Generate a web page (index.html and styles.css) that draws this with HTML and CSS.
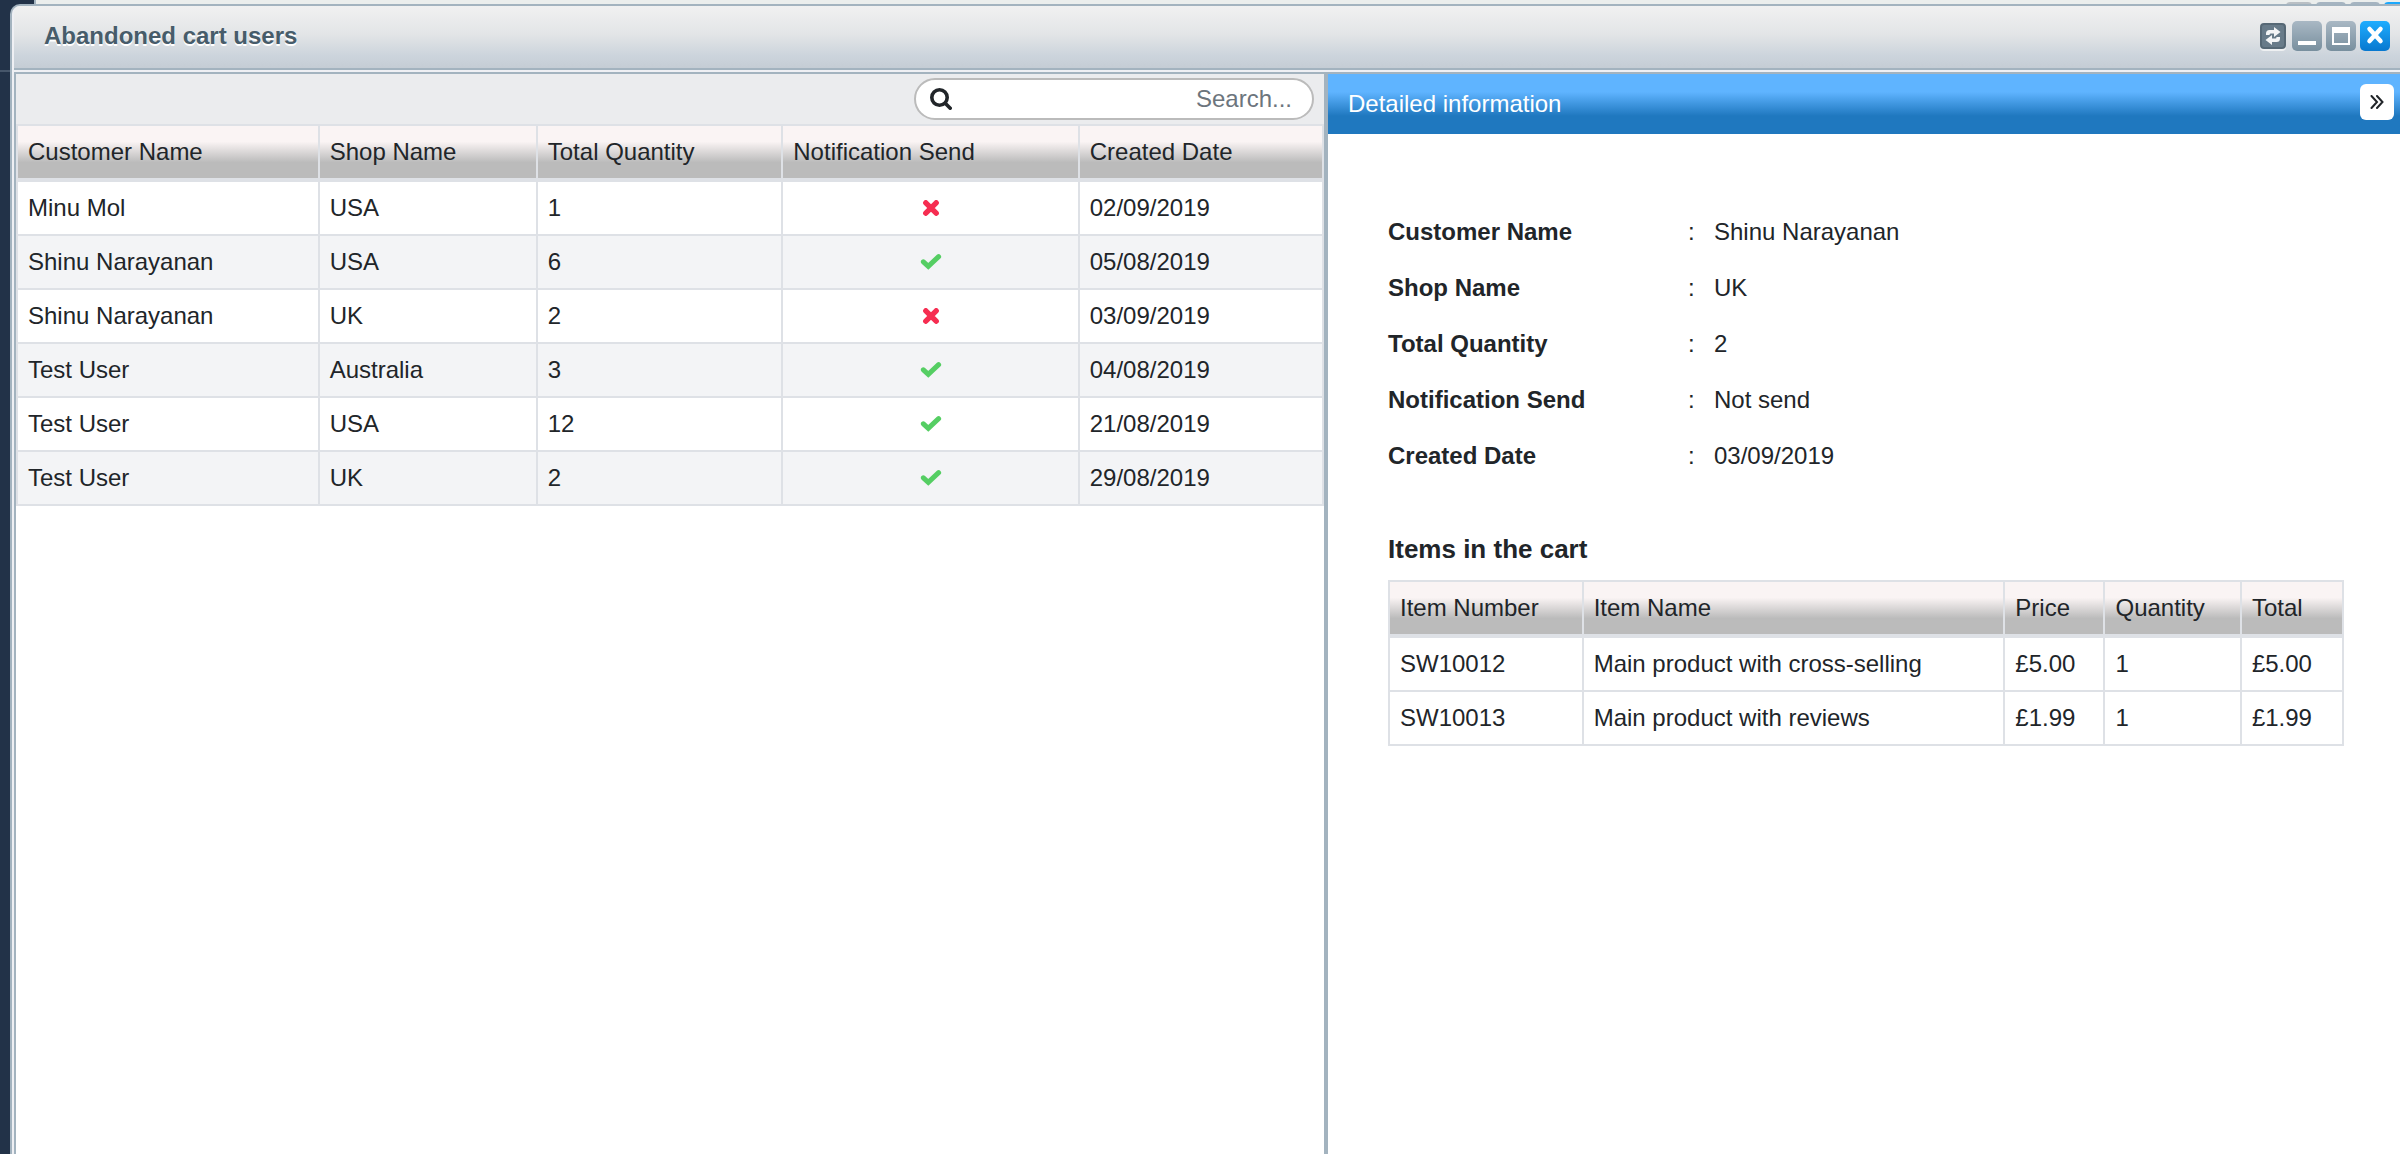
FILE: index.html
```html
<!DOCTYPE html>
<html lang="en">
<head>
<meta charset="utf-8">
<title>Abandoned cart users</title>
<link rel="stylesheet" href="styles.css">
</head>
<body>
<svg class="sprite" aria-hidden="true">
  <symbol id="yes" viewBox="0 0 22 16"><path d="M3.400 7.800L8.300 12.300L18.600 2.700" fill="none" stroke="#55ce63" stroke-width="5" stroke-linecap="round"/></symbol>
  <symbol id="no" viewBox="0 0 22 16"><path d="M5.800 2.800L16.200 13.200M16.200 2.800L5.800 13.200" fill="none" stroke="#f62d51" stroke-width="5.400" stroke-linecap="round"/></symbol>
</svg>

<div class="back-window" aria-hidden="true">
  <span class="back-tool faint"></span><span class="back-tool"></span><span class="back-tool"></span><span class="back-tool blue"></span>
</div>

<main class="window">
  <header class="title-bar">
    <h1 class="title">Abandoned cart users</h1>
    <div class="tools">
      <button class="tool refresh" type="button" aria-label="Refresh"><svg viewBox="0 0 22 22"><path d="M4 10V8.500Q4 5 7.500 5H12V2l6.500 5L12 12V8.500H8.500Q7.500 8.500 7.500 10zM18 12v1.500q0 3.500-3.500 3.500H10v3L3.500 15 10 10v3.500h3.500q1 0 1-1.500z" fill="#f4f5f6"/></svg></button>
      <button class="tool" type="button" aria-label="Minimize"><svg viewBox="0 0 30 30"><rect x="6" y="20" width="18" height="4" fill="#fff"/></svg></button>
      <button class="tool" type="button" aria-label="Maximize"><svg viewBox="0 0 30 30"><path d="M6 6h18v18H6zM8 12v10h14V12z" fill="#fff" fill-rule="evenodd"/></svg></button>
      <button class="tool close" type="button" aria-label="Close"><svg viewBox="0 0 30 30"><path d="M9.500 8l11 12M20.500 8l-11 12" stroke="#fff" stroke-width="4.500" stroke-linecap="round"/></svg></button>
    </div>
  </header>

  <div class="panes">
    <section class="list-pane">
      <form class="toolbar">
        <label class="search">
          <svg class="search-icon" viewBox="0 0 22 22" aria-hidden="true"><circle cx="9.500" cy="9.500" r="7.700" fill="none" stroke="#212529" stroke-width="3.600"/><path d="M15.500 15.500l4.700 4.700" stroke="#212529" stroke-width="3.600" stroke-linecap="round"/></svg>
          <input class="search-input" type="text" placeholder="Search..." aria-label="Search">
        </label>
      </form>
      <table class="grid users">
        <colgroup><col class="u-name"><col class="u-shop"><col class="u-qty"><col class="u-note"><col class="u-date"></colgroup>
        <thead>
          <tr><th scope="col">Customer Name</th><th scope="col">Shop Name</th><th scope="col">Total Quantity</th><th scope="col">Notification Send</th><th scope="col">Created Date</th></tr>
        </thead>
        <tbody>
          <tr><td>Minu Mol</td><td>USA</td><td>1</td><td><svg class="mark" role="img" aria-label="Not sent"><use href="#no"/></svg></td><td>02/09/2019</td></tr>
          <tr><td>Shinu Narayanan</td><td>USA</td><td>6</td><td><svg class="mark" role="img" aria-label="Sent"><use href="#yes"/></svg></td><td>05/08/2019</td></tr>
          <tr><td>Shinu Narayanan</td><td>UK</td><td>2</td><td><svg class="mark" role="img" aria-label="Not sent"><use href="#no"/></svg></td><td>03/09/2019</td></tr>
          <tr><td>Test User</td><td>Australia</td><td>3</td><td><svg class="mark" role="img" aria-label="Sent"><use href="#yes"/></svg></td><td>04/08/2019</td></tr>
          <tr><td>Test User</td><td>USA</td><td>12</td><td><svg class="mark" role="img" aria-label="Sent"><use href="#yes"/></svg></td><td>21/08/2019</td></tr>
          <tr><td>Test User</td><td>UK</td><td>2</td><td><svg class="mark" role="img" aria-label="Sent"><use href="#yes"/></svg></td><td>29/08/2019</td></tr>
        </tbody>
      </table>
    </section>

    <section class="detail-pane">
      <header class="detail-head">
        <h2 class="detail-title">Detailed information</h2>
        <button class="collapse" type="button" aria-label="Collapse panel"><svg viewBox="0 0 14 14"><path d="M1.500 1L7 7l-5.500 6M7 1l5.500 6L7 13" fill="none" stroke="#212529" stroke-width="2" stroke-linecap="round"/></svg></button>
      </header>
      <div class="detail-body">
        <dl class="facts">
          <div class="fact"><dt>Customer Name</dt><dd><span class="colon">:</span>Shinu Narayanan</dd></div>
          <div class="fact"><dt>Shop Name</dt><dd><span class="colon">:</span>UK</dd></div>
          <div class="fact"><dt>Total Quantity</dt><dd><span class="colon">:</span>2</dd></div>
          <div class="fact"><dt>Notification Send</dt><dd><span class="colon">:</span>Not send</dd></div>
          <div class="fact"><dt>Created Date</dt><dd><span class="colon">:</span>03/09/2019</dd></div>
        </dl>
        <h3 class="items-title">Items in the cart</h3>
        <table class="grid">
          <colgroup><col class="i-number"><col class="i-name"><col class="i-price"><col class="i-qty"><col class="i-total"></colgroup>
          <thead>
            <tr><th scope="col">Item Number</th><th scope="col">Item Name</th><th scope="col">Price</th><th scope="col">Quantity</th><th scope="col">Total</th></tr>
          </thead>
          <tbody>
            <tr><td>SW10012</td><td>Main product with cross-selling</td><td>£5.00</td><td>1</td><td>£5.00</td></tr>
            <tr><td>SW10013</td><td>Main product with reviews</td><td>£1.99</td><td>1</td><td>£1.99</td></tr>
          </tbody>
        </table>
      </div>
    </section>
  </div>
</main>
</body>
</html>
```

FILE: styles.css
```css
:root {
  --frame: #a3b3bf;
  --inner: #eff0f4;
  --line: #dee1e6;
  --ink: #212529;
}

* { box-sizing: border-box; }

body {
  margin: 0;
  min-height: 100vh;
  display: flex;
  flex-direction: column;
  background: linear-gradient(#46566a, #46566a) no-repeat 0 70px / 10px 2px, #223248;
  color: var(--ink);
  font: 24px/36px "Liberation Sans", Arial, sans-serif;
}

h1, h2, h3, dl, dd { margin: 0; }

button {
  padding: 0;
  border: 0;
  display: flex;
  align-items: center;
  justify-content: center;
}

.sprite { display: none; }

/* Window lying behind this one; only its bottom edge shows */
.back-window {
  height: 4px;
  margin-left: 34px;
  padding: 2px 0 0;
  border-left: 2px solid var(--frame);
  background: #ebeeed;
  display: flex;
  justify-content: flex-end;
  gap: 4px;
  overflow: hidden;
}

.back-tool {
  flex: none;
  width: 30px;
  height: 30px;
  border-radius: 4px;
  background: #a5b4c1;
}

.back-tool.faint { width: 26px; background: #b9bfc4; }
.back-tool.blue { margin-right: -14px; background: #1ba8fc; }

.window {
  flex: 1;
  display: flex;
  flex-direction: column;
  margin-left: 10px;
  padding-left: 2px;
  border: solid var(--frame);
  border-width: 2px 0 0 2px;
  border-top-left-radius: 10px;
  background: var(--inner);
}

.title-bar {
  display: flex;
  align-items: center;
  justify-content: space-between;
  height: 64px;
  padding: 0 10px 2px 30px;
  border-bottom: 2px solid var(--frame);
  border-top-left-radius: 6px;
  background: linear-gradient(#f1f1f1, #e3e5e7 45%, #ccd4dc 80%, #c5cdd5);
}

.title {
  color: #475c6a;
  font-size: 24px;
  line-height: 36px;
  text-shadow: 0 2px 0 #fff;
}

.tools {
  display: flex;
  align-items: center;
  gap: 4px;
}

.tool {
  width: 30px;
  height: 30px;
  border-radius: 5px;
  background: linear-gradient(#a9b8c4, #788f9e);
}

.tool svg { width: 100%; height: 100%; }

.refresh {
  width: 26px;
  height: 26px;
  margin-right: 2px;
  border: 2px solid #566875;
  border-radius: 4px;
  background: #687b89;
  box-shadow: 0 2px 0 #eef0f2;
}

.close { background: linear-gradient(#1fadff, #0878cf); }

.panes {
  flex: 1;
  display: grid;
  grid-template-columns: 1312fr 1072fr;
  margin-top: 2px;
  border: solid var(--frame);
  border-width: 2px 0 0 2px;
  background: #fff;
}

.list-pane {
  min-width: 0;
  border-right: 4px solid var(--frame);
}

.toolbar {
  display: flex;
  justify-content: flex-end;
  padding: 4px 10px;
  background: #ebecee;
}

.search {
  display: flex;
  align-items: center;
  width: 400px;
  height: 42px;
  padding: 0 20px 0 14px;
  border: 2px solid #bbb;
  border-radius: 21px;
  background: #fff;
}

.search-icon { flex: none; width: 22px; height: 22px; }

.search-input {
  flex: 1;
  min-width: 0;
  padding: 0;
  border: 0;
  outline: 0;
  background: none;
  color: var(--ink);
  font: inherit;
  text-align: right;
}

.search-input::placeholder { color: #6c757d; opacity: 1; }

.grid {
  width: 100%;
  table-layout: fixed;
  border-collapse: collapse;
}

.grid th,
.grid td {
  padding: 8px 10px;
  border: 2px solid var(--line);
  text-align: left;
  font-weight: normal;
}

.grid th {
  border-bottom-width: 4px;
  background: linear-gradient(#faf4f4 30%, #bbb 70%) padding-box;
}

.users tbody tr:nth-child(even) { background: #f3f4f6; }

.mark {
  display: block;
  width: 22px;
  height: 16px;
  margin: 0 auto;
}

.u-name { width: 23.1%; }
.u-shop { width: 16.7%; }
.u-qty { width: 18.8%; }
.u-note { width: 22.7%; }
.u-date { width: 18.7%; }

.i-number { width: 20.3%; }
.i-name { width: 44.2%; }
.i-price { width: 10.5%; }
.i-qty { width: 14.3%; }
.i-total { width: 10.7%; }

.detail-pane { min-width: 0; }

.detail-head {
  display: flex;
  align-items: center;
  justify-content: space-between;
  height: 60px;
  padding: 0 6px 0 20px;
  background: linear-gradient(#5fb4ff 30%, #1f78bf 70%);
}

.detail-title {
  color: #fff;
  font-size: 24px;
  font-weight: normal;
}

.collapse {
  width: 34px;
  height: 36px;
  margin-top: -4px;
  border-radius: 6px;
  background: #fff;
}

.collapse svg { width: 14px; height: 14px; }

.detail-body { padding: 70px 56px 40px 60px; }

.facts { margin-bottom: 46px; }

.fact {
  display: flex;
  padding: 10px 0;
}

.fact dt {
  flex: none;
  width: 300px;
  font-weight: bold;
}

.fact dd { display: flex; }
.colon { width: 26px; }

.items-title {
  margin-bottom: 12px;
  font-size: 26px;
  line-height: 38px;
}
```
